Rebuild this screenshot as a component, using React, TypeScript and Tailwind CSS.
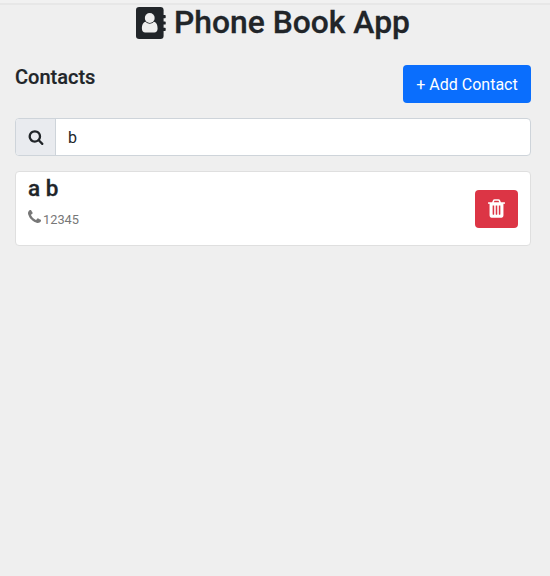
type IconProps = { className?: string };

function AddressBookIcon({ className }: IconProps) {
  return (
    <svg viewBox="0 0 30 32" className={className} aria-hidden="true">
      <rect x="0" y="0" width="27.6" height="32" rx="3.2" fill="currentColor" />
      <path d="M27 8h2a.7.7 0 0 1 .7.7v1.8a.7.7 0 0 1-.7.7h-2zM27 14.400h2a.7.7 0 0 1 .7.7v1.8a.7.7 0 0 1-.7.7h-2zM27 20.800h2a.7.7 0 0 1 .7.7v1.8a.7.7 0 0 1-.7.7h-2z" fill="currentColor" />
      <path d="M9.700 14.800C7 15.300 5.900 18.300 5.900 21.400C5.900 24 7.300 25.400 9.200 25.400H18.300C20.200 25.400 21.600 24 21.600 21.400C21.600 18.300 20.500 15.300 17.800 14.800C16.500 16.200 15.200 16.700 13.750 16.700C12.300 16.700 11 16.200 9.700 14.800Z" fill="#efefef" />
      <circle cx="13.75" cy="11" r="4.900" fill="#efefef" />
    </svg>
  );
}

function SearchIcon({ className }: IconProps) {
  return (
    <svg viewBox="0 0 1792 1792" fill="currentColor" className={className} aria-hidden="true">
      <path d="M1216 832q0-185-131.5-316.5t-316.5-131.5-316.5 131.5-131.5 316.5 131.5 316.5 316.5 131.5 316.5-131.5 131.5-316.5zm512 832q0 52-38 90t-90 38q-54 0-90-38l-343-342q-179 124-399 124-143 0-273.5-55.5t-225-150-150-225-55.5-273.5 55.5-273.5 150-225 225-150 273.5-55.5 273.5 55.5 225 150 150 225 55.5 273.5q0 220-124 399l343 343q37 37 37 90z" />
    </svg>
  );
}

function PhoneIcon({ className }: IconProps) {
  return (
    <svg viewBox="192 128 1408 1408" fill="currentColor" className={className} aria-hidden="true">
      <path d="M1600 1240q0 27-10 70.5t-21 68.5q-21 50-122 106-94 51-186 51-27 0-53-3.5t-57.5-12.5-47-14.5-55.5-20.5-49-18q-98-35-175-83-127-79-264-216t-216-264q-48-77-83-175-3-9-18-49t-20.5-55.5-14.5-47-12.5-57.5-3.5-53q0-92 51-186 56-101 106-122 25-11 68.5-21t70.5-10q14 0 21 3 18 6 53 76 11 19 30 54t35 63.5 31 53.5q3 4 17.5 25t21.5 35.5 7 28.5q0 20-28.5 50t-62 55-62 53-28.5 46q0 9 5 22.5t8.5 20.5 14 24 11.5 19q76 137 174 235t235 174q2 1 19 11.5t24 14 20.5 8.5 22.5 5q18 0 46-28.5t53-62 55-62 50-28.5q14 0 28.5 7t35.5 21.5 25 17.5q25 15 53.5 31t63.5 35 54 30q70 35 76 53 3 7 3 21z" />
    </svg>
  );
}

function TrashIcon({ className }: IconProps) {
  return (
    <svg viewBox="192 128 1408 1536" fill="currentColor" className={className} aria-hidden="true">
      <path d="M704 1376v-704q0-14-9-23t-23-9h-64q-14 0-23 9t-9 23v704q0 14 9 23t23 9h64q14 0 23-9t9-23zm256 0v-704q0-14-9-23t-23-9h-64q-14 0-23 9t-9 23v704q0 14 9 23t23 9h64q14 0 23-9t9-23zm256 0v-704q0-14-9-23t-23-9h-64q-14 0-23 9t-9 23v704q0 14 9 23t23 9h64q14 0 23-9t9-23zm-544-992h448l-48-117q-7-9-17-11h-317q-10 2-17 11zm928 32v64q0 14-9 23t-23 9h-96v948q0 83-47 143.5t-113 60.5h-832q-66 0-113-58.5t-47-141.5v-952h-96q-14 0-23-9t-9-23v-64q0-14 9-23t23-9h309l70-167q15-37 54-63t79-26h320q40 0 79 26t54 63l70 167h309q14 0 23 9t9 23z" />
    </svg>
  );
}

export default function App() {
  return (
    <div className="h-[576px] w-[550px] bg-[#efefef] font-['Roboto',sans-serif] text-[#212529]">
      <div className="h-[5px] border-b-2 border-[#e7e7e7] bg-[#f1f1f1]" />
      <main className="pr-[19px] pl-[15px]">
        <h1 className="flex h-[35px] items-center justify-center text-[31.8px] leading-[35px] font-medium [-webkit-text-stroke:0.3px]">
          <AddressBookIcon className="mr-2 h-8 w-[30px] [stroke-width:0]" />
          Phone Book App
        </h1>

        <div className="mt-[25px] flex items-start justify-between">
          <h2 className="text-[20px] leading-6 font-medium [-webkit-text-stroke:0.2px]">Contacts</h2>
          <button className="h-[38px] w-32 rounded-[4px] bg-[#0a6efd] pt-px text-center text-[16px] text-white">
            + Add Contact
          </button>
        </div>

        <div className="mt-[15px] flex h-[38px] overflow-hidden rounded-[4px] border border-[#ced4da] bg-white">
          <span className="flex w-10 items-center justify-center border-r border-[#ced4da] bg-[#e9ebef]">
            <SearchIcon className="size-4" />
          </span>
          <input
            className="min-w-0 flex-1 px-3 pt-0.5 text-[16px] outline-none"
            defaultValue="b"
            aria-label="Search contacts"
          />
        </div>

        <section className="mt-[15px] flex h-[75px] items-center justify-between rounded-[4px] border border-[#dfdfdf] bg-white px-3">
          <div className="h-full pt-[3px]">
            <h3 className="text-[22.5px] leading-[27px] font-medium [-webkit-text-stroke:0.3px]">a b</h3>
            <p className="mt-[7px] flex items-center gap-[2px] text-[12.8px] leading-[22px] text-[#777777]">
              <PhoneIcon className="-mt-[7px] size-[13px]" />
              <span>12345</span>
            </p>
          </div>
          <button
            className="flex h-[38px] w-[43px] items-center justify-center rounded-[4px] bg-[#dc3545] text-white"
            aria-label="Delete contact"
          >
            <TrashIcon className="h-[19px] w-[17px]" />
          </button>
        </section>
      </main>
    </div>
  );
}
